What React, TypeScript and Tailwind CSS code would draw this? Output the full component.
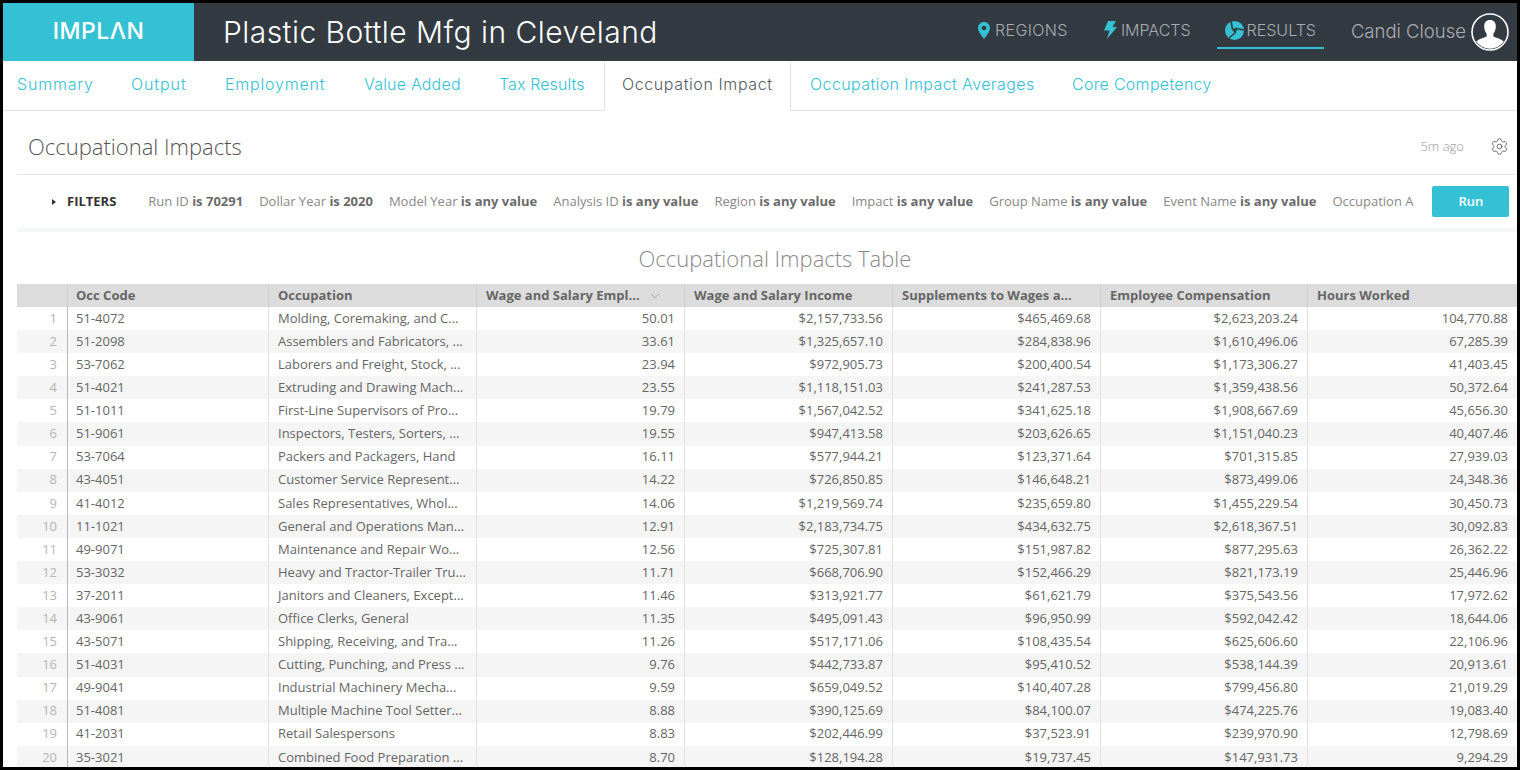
import { Settings, ChevronDown } from "lucide-react";

const rows = [
  ["51-4072", "Molding, Coremaking, and C...", "50.01", "$2,157,733.56", "$465,469.68", "$2,623,203.24", "104,770.88"],
  ["51-2098", "Assemblers and Fabricators, ...", "33.61", "$1,325,657.10", "$284,838.96", "$1,610,496.06", "67,285.39"],
  ["53-7062", "Laborers and Freight, Stock, ...", "23.94", "$972,905.73", "$200,400.54", "$1,173,306.27", "41,403.45"],
  ["51-4021", "Extruding and Drawing Mach...", "23.55", "$1,118,151.03", "$241,287.53", "$1,359,438.56", "50,372.64"],
  ["51-1011", "First-Line Supervisors of Pro...", "19.79", "$1,567,042.52", "$341,625.18", "$1,908,667.69", "45,656.30"],
  ["51-9061", "Inspectors, Testers, Sorters, ...", "19.55", "$947,413.58", "$203,626.65", "$1,151,040.23", "40,407.46"],
  ["53-7064", "Packers and Packagers, Hand", "16.11", "$577,944.21", "$123,371.64", "$701,315.85", "27,939.03"],
  ["43-4051", "Customer Service Represent...", "14.22", "$726,850.85", "$146,648.21", "$873,499.06", "24,348.36"],
  ["41-4012", "Sales Representatives, Whol...", "14.06", "$1,219,569.74", "$235,659.80", "$1,455,229.54", "30,450.73"],
  ["11-1021", "General and Operations Man...", "12.91", "$2,183,734.75", "$434,632.75", "$2,618,367.51", "30,092.83"],
  ["49-9071", "Maintenance and Repair Wo...", "12.56", "$725,307.81", "$151,987.82", "$877,295.63", "26,362.22"],
  ["53-3032", "Heavy and Tractor-Trailer Tru...", "11.71", "$668,706.90", "$152,466.29", "$821,173.19", "25,446.96"],
  ["37-2011", "Janitors and Cleaners, Except...", "11.46", "$313,921.77", "$61,621.79", "$375,543.56", "17,972.62"],
  ["43-9061", "Office Clerks, General", "11.35", "$495,091.43", "$96,950.99", "$592,042.42", "18,644.06"],
  ["43-5071", "Shipping, Receiving, and Tra...", "11.26", "$517,171.06", "$108,435.54", "$625,606.60", "22,106.96"],
  ["51-4031", "Cutting, Punching, and Press ...", "9.76", "$442,733.87", "$95,410.52", "$538,144.39", "20,913.61"],
  ["49-9041", "Industrial Machinery Mecha...", "9.59", "$659,049.52", "$140,407.28", "$799,456.80", "21,019.29"],
  ["51-4081", "Multiple Machine Tool Setter...", "8.88", "$390,125.69", "$84,100.07", "$474,225.76", "19,083.40"],
  ["41-2031", "Retail Salespersons", "8.83", "$202,446.99", "$37,523.91", "$239,970.90", "12,798.69"],
  ["35-3021", "Combined Food Preparation ...", "8.70", "$128,194.28", "$19,737.45", "$147,931.73", "9,294.29"],
];

const tabs = [
  { label: "Summary", width: "w-[109px] pl-[14px] tracking-[0.8px]" },
  { label: "Output", width: "w-[94px] pl-[19px] tracking-[0.9px]" },
  { label: "Employment", width: "w-[139px] pl-[19px] tracking-[0.8px]" },
  { label: "Value Added", width: "w-[135px] pl-[19px] tracking-[0.2px]" },
  { label: "Tax Results", width: "w-[124px] pl-[19px] tracking-[0.1px]" },
  { label: "Occupation Impact", width: "w-[187px] pl-[17px] tracking-[0.6px]" },
  { label: "Occupation Impact Averages", width: "w-[262px] pl-[19px] tracking-[0.4px]" },
  { label: "Core Competency", width: "pl-[19px] tracking-[0.3px]" },
];

const filters = [
  ["Run ID", "is 70291"],
  ["Dollar Year", "is 2020"],
  ["Model Year", "is any value"],
  ["Analysis ID", "is any value"],
  ["Region", "is any value"],
  ["Impact", "is any value"],
  ["Group Name", "is any value"],
  ["Event Name", "is any value"],
];

const headers = ["Occ Code", "Occupation", "Wage and Salary Empl...", "Wage and Salary Income", "Supplements to Wages a...", "Employee Compensation", "Hours Worked"];

const PinIcon = () => (
  <svg width="12" height="17" viewBox="0 0 12 17">
    <path d="M6 0 C2.7 0 0 2.7 0 6 C0 10 6 17 6 17 C6 17 12 10 12 6 C12 2.7 9.3 0 6 0 Z" fill="#35c1d4" />
    <circle cx="6" cy="6" r="2.3" fill="#343a42" />
  </svg>
);

const BoltIcon = () => (
  <svg width="13" height="18" viewBox="0 0 13 18">
    <path d="M4 0 L12 0 L8.5 6 L13 6 L3 18 L5.5 9.5 L0 9.5 Z" fill="#35c1d4" />
  </svg>
);

const ResultsIcon = () => (
  <svg width="19" height="19" viewBox="0 0 19 19">
    <circle cx="9.5" cy="9.5" r="9.5" fill="#35c1d4" />
    <path d="M6.5 8.5 L12 6.5 L11 12.5 Z" fill="#343a42" />
    <path d="M7.5 8 L6 0 M11 7.5 L19 9 M10.5 11.5 L4 17" stroke="#343a42" strokeWidth="1.6" />
  </svg>
);

const Avatar = () => (
  <svg width="38" height="38" viewBox="0 0 38 38">
    <circle cx="19" cy="19" r="18" fill="#343a42" stroke="#ffffff" strokeWidth="1.6" />
    <path d="M19 7 C14.8 7 13 10 13.2 14 C13.3 16.5 14.2 19 15.6 20.6 L15.6 23.4 C13 25 7.6 25.6 5.2 28.6 A17 17 0 0 0 32.8 28.6 C30.4 25.6 25 25 22.4 23.4 L22.4 20.6 C23.8 19 24.7 16.5 24.8 14 C25 10 23.2 7 19 7 Z" fill="#ffffff" />
  </svg>
);

const App = () => {
  return (
    <div className="h-[770px] w-[1520px] overflow-hidden border-[3px] border-black bg-white font-['Open_Sans',sans-serif]">
      <header className="flex h-[58px] items-center bg-[#343a42]">
        <div className="flex h-full w-[191px] items-center justify-center bg-[#35c1d4] pb-[2px] font-['Inter',sans-serif] text-[23px] font-medium tracking-[0.5px] text-white">
          IMPLΛN
        </div>
        <h1 className="ml-[29px] font-['Inter',sans-serif] text-[30px] font-light tracking-[0.45px] text-white">
          Plastic Bottle Mfg in Cleveland
        </h1>
        <nav className="ml-auto flex items-center font-['Inter',sans-serif] text-[16px] font-light text-[#a9adb1]">
          <a className="flex items-center gap-[5px] pb-[4px] tracking-[0.4px]">
            <PinIcon />
            REGIONS
          </a>
          <a className="ml-[36px] flex items-center gap-[4px] pb-[4px]">
            <BoltIcon />
            IMPACTS
          </a>
          <a className="ml-[26px] flex h-[34px] items-center gap-[3px] border-b-2 border-[#35c1d4] px-2 pb-[2px]">
            <ResultsIcon />
            RESULTS
          </a>
        </nav>
        <span className="ml-[27px] font-['Inter',sans-serif] text-[18.5px] font-light text-[#a9adb1]">Candi Clouse</span>
        <div className="ml-[5px] mr-[8px]">
          <Avatar />
        </div>
      </header>

      <div className="flex h-[50px] border-b border-[#e3e3e3] font-['Inter',sans-serif] text-[16px] font-light">
        {tabs.map((t, i) =>
          i === 5 ? (
            <div key={t.label} className={`flex h-[50px] items-center border-x border-[#e3e3e3] bg-white pb-[4px] text-[#555b61] ${t.width}`}>
              {t.label}
            </div>
          ) : (
            <div key={t.label} className={`flex items-center pb-[4px] text-[#35c1d4] ${t.width}`}>
              {t.label}
            </div>
          )
        )}
      </div>

      <div className="pl-[14px]">
        <div className="flex h-[64px] items-center border-b border-[#e6e6e6] pl-[11px] pr-[8px] pt-[8px]">
          <h2 className="text-[22px] font-light text-[#555]">Occupational Impacts</h2>
          <span className="ml-auto text-[13px] font-light text-[#999]">5m ago</span>
          <Settings size={19} strokeWidth={1.2} className="ml-[26px] text-[#666]" />
        </div>

        <div className="flex h-[57px] items-center border-b-4 border-[#f5f7f8] text-[13px]">
          <span className="ml-[35px] mr-[32px] mt-[1px] flex items-center font-bold text-[#333]">
            <span className="mr-[11px] h-0 w-0 border-y-[3.5px] border-l-[4px] border-y-transparent border-l-[#333]" />
            FILTERS
          </span>
          <div className="mt-[1px] flex w-[1268px] gap-[16px] overflow-hidden whitespace-nowrap text-[#888]">
            {filters.map(([a, b]) => (
              <span key={a} className="shrink-0">
                {a} <b className="font-bold text-[#6b6b6b]">{b}</b>
              </span>
            ))}
            <span className="shrink-0">Occupation A</span>
          </div>
          <button className="ml-[16px] h-[31px] w-[77px] shrink-0 rounded-[2px] bg-[#35c1d4] text-[13px] font-semibold text-white">
            Run
          </button>
        </div>

        <div className="flex h-[52px] items-center justify-center pl-[16px] text-[22px] font-light text-[#8a8a8a]">
          Occupational Impacts Table
        </div>

        <div className="text-[13px] text-[#666]">
          <div className="grid h-[23px] grid-cols-[51px_201px_208px_208px_208px_208px_207px_1fr] items-center bg-[#dcdcdc] font-bold text-[#666]">
            <div className="h-full border-r border-[#cfcfcf]" />
            {headers.map((h, i) => (
              <div key={h} className={`flex h-full items-center justify-between border-r border-[#cfcfcf] last:border-r-0 ${i === 0 ? "pl-[8px] pr-[9px]" : "px-[9px]"}`}>
                <span>{h}</span>
                {i === 2 && <ChevronDown size={14} strokeWidth={1} className="mr-[13px] text-[#777]" />}
              </div>
            ))}
          </div>
          {rows.map((r, i) => (
            <div
              key={r[0]}
              className={`grid h-[23.1px] grid-cols-[51px_201px_208px_208px_208px_208px_207px_1fr] items-center ${i % 2 === 1 ? "bg-[#f5f5f6]" : "bg-white"}`}
            >
              <div className="flex h-full items-center justify-end border-r border-[#b9b9b9] pr-[10px] text-[#b5b5b5]">{i + 1}</div>
              {r.map((c, j) => (
                <div
                  key={j}
                  className={`flex h-full items-center whitespace-nowrap border-r border-[#e2e2e2] last:border-r-0 ${j === 0 ? "pl-[8px] pr-[9px]" : "px-[9px]"} ${j > 1 ? "justify-end" : ""}`}
                >
                  {c}
                </div>
              ))}
            </div>
          ))}
        </div>
      </div>
    </div>
  );
};

export default App;
